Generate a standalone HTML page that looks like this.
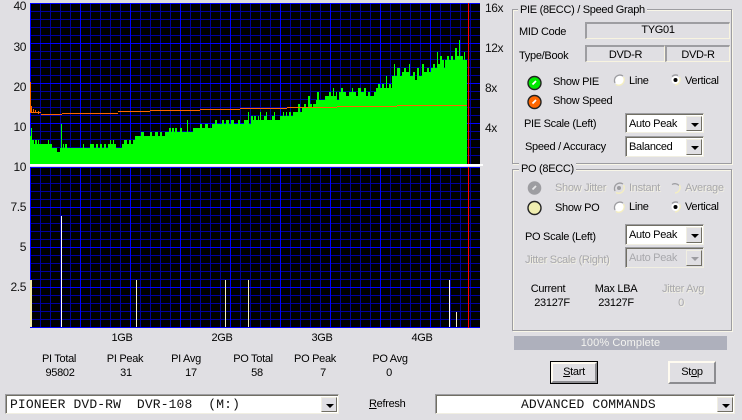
<!DOCTYPE html>
<html><head><meta charset="utf-8">
<style>
html,body{margin:0;padding:0;background:#e0dfe3;}
#p{position:relative;width:742px;height:420px;overflow:hidden;background:#e0dfe3;font:11px "Liberation Sans",sans-serif;letter-spacing:-.3px;color:#000;}
.t{position:absolute;white-space:nowrap;line-height:14px;height:14px;}
.c{transform:translateX(-50%);}
.g{color:#a8a8ac;text-shadow:1px 1px 0 #f1efe2;}
.ax{font-size:12px;color:#111;letter-spacing:-.4px;}
.frame{position:absolute;border:1px solid #9d9da1;box-shadow:1px 1px 0 #f8f6e8,inset 1px 1px 0 #f8f6e8;box-sizing:border-box;}
.lg{position:absolute;background:#e0dfe3;padding:0 2px;line-height:14px;white-space:nowrap;}
.sk{position:absolute;box-sizing:border-box;border-style:solid;border-width:2px 1px 1px 2px;border-color:#9d9da1 #f8f4e0 #f8f4e0 #9d9da1;text-align:center;line-height:13px;}
.cb{position:absolute;box-sizing:border-box;border:1px solid;border-color:#9d9da1 #f1efe2 #f1efe2 #9d9da1;box-shadow:inset 1px 1px 0 #716f64;background:#fff;}
.cb .v{position:absolute;left:3px;top:3px;line-height:14px;white-space:nowrap;}
.cb .m{font-family:"Liberation Mono",monospace;font-size:13px;letter-spacing:.13px;color:#111;line-height:16px;white-space:pre;top:2px;}
.ar{position:absolute;right:1px;top:2px;bottom:1px;width:16px;box-sizing:border-box;background:#e0dfe3;border:1px solid;border-color:#f1efe2 #716f64 #716f64 #f1efe2;}
.ar:after{content:"";position:absolute;left:4px;top:6px;border:4px solid transparent;border-top:4px solid #000;border-bottom:0;}
.dis{background:#e0dfe3;}
.dis .v{color:#a8a8ac;}
.dis .ar:after{border-top-color:#9d9da1;}
.btn{position:absolute;box-sizing:border-box;background:#e0dfe3;border:2px solid;border-color:#fffbf0 #8c8c90 #8c8c90 #fffbf0;text-align:center;line-height:17px;}
</style></head><body><div id="p">

<svg style="position:absolute;left:0;top:0" width="742" height="335" shape-rendering="crispEdges">
<rect x="30" y="3" width="450" height="161" fill="#000"/>
<rect x="30" y="167" width="450" height="161" fill="#000"/>
<g stroke="#0000a0" stroke-width="1" fill="none">
<path d="M40.5 3V164M50.5 3V164M60.5 3V164M70.5 3V164M90.5 3V164M100.5 3V164M110.5 3V164M120.5 3V164M140.5 3V164M150.5 3V164M160.5 3V164M170.5 3V164M190.5 3V164M200.5 3V164M210.5 3V164M220.5 3V164M240.5 3V164M250.5 3V164M260.5 3V164M270.5 3V164M290.5 3V164M300.5 3V164M310.5 3V164M320.5 3V164M340.5 3V164M350.5 3V164M360.5 3V164M370.5 3V164M390.5 3V164M400.5 3V164M410.5 3V164M420.5 3V164M440.5 3V164M450.5 3V164M460.5 3V164M470.5 3V164"/>
<path d="M40.5 167V328M50.5 167V328M60.5 167V328M70.5 167V328M90.5 167V328M100.5 167V328M110.5 167V328M120.5 167V328M140.5 167V328M150.5 167V328M160.5 167V328M170.5 167V328M190.5 167V328M200.5 167V328M210.5 167V328M220.5 167V328M240.5 167V328M250.5 167V328M260.5 167V328M270.5 167V328M290.5 167V328M300.5 167V328M310.5 167V328M320.5 167V328M340.5 167V328M350.5 167V328M360.5 167V328M370.5 167V328M390.5 167V328M400.5 167V328M410.5 167V328M420.5 167V328M440.5 167V328M450.5 167V328M460.5 167V328M470.5 167V328"/>
<path d="M30 11.5H480M30 19.5H480M30 27.5H480M30 35.5H480M30 51.5H480M30 59.5H480M30 67.5H480M30 75.5H480M30 91.5H480M30 99.5H480M30 107.5H480M30 115.5H480M30 131.5H480M30 139.5H480M30 147.5H480M30 155.5H480"/>
<path d="M30 175.5H480M30 183.5H480M30 191.5H480M30 199.5H480M30 215.5H480M30 223.5H480M30 231.5H480M30 239.5H480M30 255.5H480M30 263.5H480M30 271.5H480M30 279.5H480M30 295.5H480M30 303.5H480M30 311.5H480M30 319.5H480"/>
</g>
<g stroke="#0000ff" stroke-width="1" fill="none">
<path d="M30.5 3V164M80.5 3V164M130.5 3V164M180.5 3V164M230.5 3V164M280.5 3V164M330.5 3V164M380.5 3V164M430.5 3V164"/>
<path d="M30.5 167V328M80.5 167V328M130.5 167V328M180.5 167V328M230.5 167V328M280.5 167V328M330.5 167V328M380.5 167V328M430.5 167V328"/>
<path d="M30 3.5H480M30 43.5H480M30 83.5H480M30 123.5H480"/>
<path d="M30 167.5H480M30 207.5H480M30 247.5H480M30 287.5H480M30 327.5H480"/>
</g>
<path fill="#00ff00" d="M30 164V136H31V128H32V140H34V144H35V140H37V144H38V140H39V144H48V140H49V144H52V148H57V152H60V148H61V124H62V148H63V144H64V148H65V144H67V148H83V144H84V148H90V144H94V148H96V144H98V148H100V144H102V148H104V144H106V148H108V144H110V140H111V144H113V140H114V144H116V148H122V144H124V140H127V144H129V140H131V144H133V140H135V136H141V132H144V136H150V132H152V136H155V132H158V136H160V132H162V136H165V132H169V128H171V132H172V128H174V132H175V128H177V132H180V128H182V132H187V120H188V132H193V128H200V124H202V128H205V124H208V128H212V124H215V120H217V124H222V120H224V124H226V120H229V124H231V120H234V124H238V120H240V124H244V120H248V112H249V124H251V116H253V120H254V116H256V120H258V116H259V120H260V112H261V120H264V116H266V112H267V120H272V116H274V112H275V120H280V116H283V112H284V116H286V112H287V116H289V112H291V116H293V112H298V104H300V112H302V108H304V104H306V108H308V96H310V104H312V108H313V104H316V100H317V92H319V100H325V96H329V92H331V96H333V88H334V96H336V92H337V100H339V92H341V88H343V92H346V96H349V92H352V88H353V92H356V96H358V88H361V92H364V88H366V96H368V92H370V96H374V92H376V88H378V84H380V88H382V84H384V88H386V76H387V88H389V84H391V88H392V76H394V64H395V76H397V68H400V76H402V72H404V68H406V72H409V64H410V76H413V72H415V80H417V68H419V76H422V64H424V72H427V68H429V72H431V68H433V64H435V68H437V52H438V64H440V56H442V60H444V68H445V60H447V56H449V60H451V56H453V60H455V48H457V56H459V40H460V56H463V60H464V52H465V60H467V164Z"/>
<g fill="#ff6600">
<rect x="30" y="82" width="1" height="31"/>
<rect x="31" y="106" width="1" height="7"/><rect x="33" y="109" width="1" height="4"/><rect x="35" y="110" width="1" height="3"/><rect x="38" y="111" width="1" height="3"/>
<rect x="31" y="112" width="10" height="1"/>
<rect x="41" y="114" width="21" height="1"/><rect x="62" y="113" width="56" height="1"/>
<rect x="118" y="111" width="32" height="1"/><rect x="150" y="110" width="50" height="1"/>
<rect x="200" y="109" width="40" height="1"/><rect x="240" y="108" width="47" height="1"/>
<rect x="287" y="107" width="50" height="1"/><rect x="337" y="106" width="60" height="1"/>
<rect x="397" y="105" width="70" height="1"/>
</g>
<rect x="30" y="164" width="453" height="2" fill="#fff"/>
<rect x="468" y="3" width="1" height="161" fill="#ff0000"/>
<rect x="468" y="167" width="1" height="161" fill="#ff0000"/>
<rect x="30" y="280" width="2" height="47" fill="#f1e9a8"/>
<rect x="61" y="216" width="1" height="111" fill="#fffdf0"/>
<rect x="136" y="280" width="1" height="47" fill="#f5efc0"/>
<rect x="225" y="280" width="1" height="47" fill="#f5efc0"/>
<rect x="248" y="280" width="1" height="47" fill="#f5efc0"/>
<rect x="449" y="280" width="1" height="47" fill="#fffdf0"/>
<rect x="456" y="312" width="1" height="15" fill="#f5efc0"/>
</svg>

<div class="t ax" style="right:716px;top:-1px">40</div>
<div class="t ax" style="right:716px;top:40px">30</div>
<div class="t ax" style="right:716px;top:80px">20</div>
<div class="t ax" style="right:716px;top:120px">10</div>
<div class="t ax" style="right:716px;top:160px">10</div>
<div class="t ax" style="right:716px;top:200px">7.5</div>
<div class="t ax" style="right:716px;top:240px">5</div>
<div class="t ax" style="right:716px;top:280px">2.5</div>
<div class="t ax" style="left:485px;top:1px">16x</div>
<div class="t ax" style="left:485px;top:41px">12x</div>
<div class="t ax" style="left:485px;top:81px">8x</div>
<div class="t ax" style="left:485px;top:121px">4x</div>

<div class="t c" style="left:122px;top:331px">1GB</div>
<div class="t c" style="left:222px;top:331px">2GB</div>
<div class="t c" style="left:322px;top:331px">3GB</div>
<div class="t c" style="left:422px;top:331px">4GB</div>

<div class="t c" style="left:59px;top:352px">PI Total</div><div class="t c" style="left:60px;top:366px">95802</div>
<div class="t c" style="left:125px;top:352px">PI Peak</div><div class="t c" style="left:126px;top:366px">31</div>
<div class="t c" style="left:186px;top:352px">PI Avg</div><div class="t c" style="left:191px;top:366px">17</div>
<div class="t c" style="left:253px;top:352px">PO Total</div><div class="t c" style="left:257px;top:366px">58</div>
<div class="t c" style="left:315px;top:352px">PO Peak</div><div class="t c" style="left:323px;top:366px">7</div>
<div class="t c" style="left:390px;top:352px">PO Avg</div><div class="t c" style="left:389px;top:366px">0</div>

<!-- PIE group -->
<div class="frame" style="left:512px;top:9px;width:220px;height:155px"></div>
<div class="lg" style="left:518px;top:3px">PIE (8ECC) / Speed Graph</div>
<div class="t" style="left:519px;top:25px">MID Code</div>
<div class="sk" style="left:585px;top:22px;width:145px;height:17px">TYG01</div>
<div class="t" style="left:519px;top:49px">Type/Book</div>
<div class="sk" style="left:585px;top:45px;width:80px;height:17px;line-height:16px">DVD-R</div>
<div class="sk" style="left:665px;top:45px;width:65px;height:17px;line-height:16px">DVD-R</div>

<svg style="position:absolute;left:526px;top:75px" width="17" height="36">
<circle cx="8.5" cy="8" r="6.5" fill="#00e800" stroke="#222" stroke-width="1.4"/>
<path d="M6.5 9.5L10 6" stroke="#fff" stroke-width="1.8"/>
<circle cx="8.5" cy="27" r="6.5" fill="#ff6600" stroke="#222" stroke-width="1.4"/>
<path d="M6.5 28.5L10 25" stroke="#fff" stroke-width="1.8"/>
</svg>
<div class="t" style="left:553px;top:75px">Show PIE</div>
<div class="t" style="left:553px;top:94px">Show Speed</div>

<svg style="position:absolute;left:612px;top:73px" width="14" height="14">
<circle cx="7" cy="7" r="4.8" fill="#fff"/>
<path d="M3 10A5.5 5.5 0 0 1 11 3" fill="none" stroke="#9d9da1" stroke-width="1.3"/>
<path d="M11.5 4A5.5 5.5 0 0 1 4 11.5" fill="none" stroke="#f5efc0" stroke-width="1.3"/>
</svg>
<div class="t" style="left:629px;top:74px">Line</div>
<svg style="position:absolute;left:669px;top:73px" width="14" height="14">
<circle cx="6.5" cy="7" r="4" fill="#fff"/>
<path d="M3 3.5A5.5 5.5 0 0 1 9 2.5" fill="none" stroke="#9d9da1" stroke-width="1.3"/>
<path d="M10.5 4A5.5 5.5 0 0 1 6 12" fill="none" stroke="#f5efc0" stroke-width="1.3"/>
<circle cx="6.5" cy="7" r="2" fill="#000"/>
</svg>
<div class="t" style="left:685px;top:74px">Vertical</div>

<div class="t" style="left:524px;top:117px">PIE Scale (Left)</div>
<div class="cb" style="left:625px;top:113px;width:79px;height:20px"><span class="v">Auto Peak</span><i class="ar"></i></div>
<div class="t" style="left:525px;top:140px">Speed / Accuracy</div>
<div class="cb" style="left:625px;top:136px;width:79px;height:21px"><span class="v">Balanced</span><i class="ar"></i></div>

<!-- PO group -->
<div class="frame" style="left:512px;top:169px;width:220px;height:162px"></div>
<div class="lg" style="left:519px;top:162px">PO (8ECC)</div>

<svg style="position:absolute;left:526px;top:180px" width="17" height="36">
<circle cx="8.5" cy="8" r="6.8" fill="#9d9da1"/>
<path d="M6.5 9.5L10 6" stroke="#e8e8e8" stroke-width="1.8"/>
<circle cx="8.5" cy="28" r="6.5" fill="#f0eeb0" stroke="#222" stroke-width="1.4"/>
</svg>
<div class="t g" style="left:555px;top:181px">Show Jitter</div>
<div class="t" style="left:555px;top:201px">Show PO</div>

<svg style="position:absolute;left:612px;top:181px" width="14" height="14">
<path d="M3 10A5.5 5.5 0 0 1 11 3" fill="none" stroke="#9d9da1" stroke-width="1.3"/>
<path d="M11.5 4A5.5 5.5 0 0 1 4 11.5" fill="none" stroke="#f5efc0" stroke-width="1.3"/>
<circle cx="7" cy="7" r="2" fill="#9d9da1"/>
</svg>
<div class="t g" style="left:629px;top:181px">Instant</div>
<svg style="position:absolute;left:669px;top:181px" width="14" height="14">
<path d="M3 3.5A5.5 5.5 0 0 1 10 4.5" fill="none" stroke="#9d9da1" stroke-width="1.3"/>
<path d="M10.5 4A5.5 5.5 0 0 1 6 12" fill="none" stroke="#f5efc0" stroke-width="1.3"/>
</svg>
<div class="t g" style="left:685px;top:181px">Average</div>

<svg style="position:absolute;left:612px;top:200px" width="14" height="14">
<circle cx="7" cy="7" r="4.8" fill="#fff"/>
<path d="M3 10A5.5 5.5 0 0 1 11 3" fill="none" stroke="#9d9da1" stroke-width="1.3"/>
<path d="M11.5 4A5.5 5.5 0 0 1 4 11.5" fill="none" stroke="#f5efc0" stroke-width="1.3"/>
</svg>
<div class="t" style="left:629px;top:200px">Line</div>
<svg style="position:absolute;left:669px;top:200px" width="14" height="14">
<circle cx="6.5" cy="7" r="4" fill="#fff"/>
<path d="M3 3.5A5.5 5.5 0 0 1 9 2.5" fill="none" stroke="#9d9da1" stroke-width="1.3"/>
<path d="M10.5 4A5.5 5.5 0 0 1 6 12" fill="none" stroke="#f5efc0" stroke-width="1.3"/>
<circle cx="6.5" cy="7" r="2" fill="#000"/>
</svg>
<div class="t" style="left:685px;top:200px">Vertical</div>

<div class="t" style="left:525px;top:230px">PO Scale (Left)</div>
<div class="cb" style="left:625px;top:224px;width:79px;height:21px"><span class="v">Auto Peak</span><i class="ar"></i></div>
<div class="t g" style="left:525px;top:253px">Jitter Scale (Right)</div>
<div class="cb dis" style="left:625px;top:247px;width:79px;height:21px"><span class="v">Auto Peak</span><i class="ar"></i></div>

<div class="t c" style="left:548px;top:282px">Current</div><div class="t c" style="left:552px;top:296px">23127F</div>
<div class="t c" style="left:616px;top:282px">Max LBA</div><div class="t c" style="left:616px;top:296px">23127F</div>
<div class="t c g" style="left:683px;top:282px">Jitter Avg</div><div class="t c g" style="left:681px;top:296px">0</div>

<div style="position:absolute;left:514px;top:336px;width:213px;height:14px;background:#aeb0bc;color:#f4f4f0;text-align:center;line-height:14px;letter-spacing:.1px">100% Complete</div>

<div style="position:absolute;left:550px;top:361px;width:48px;height:23px;box-sizing:border-box;border:1px solid #000"><div class="btn" style="left:0;top:0;width:46px;height:21px"><u>S</u>tart</div></div>
<div class="btn" style="left:668px;top:361px;width:48px;height:23px;line-height:19px">St<u>o</u>p</div>

<div class="cb" style="left:5px;top:394px;width:334px;height:20px"><span class="v m" style="left:4px">PIONEER DVD-RW  DVR-108  (M:)</span><i class="ar"></i></div>
<div class="t" style="left:369px;top:397px"><u>R</u>efresh</div>
<div class="cb" style="left:435px;top:394px;width:300px;height:20px"><span class="v m" style="left:85px">ADVANCED COMMANDS</span><i class="ar"></i></div>

</div></body></html>
